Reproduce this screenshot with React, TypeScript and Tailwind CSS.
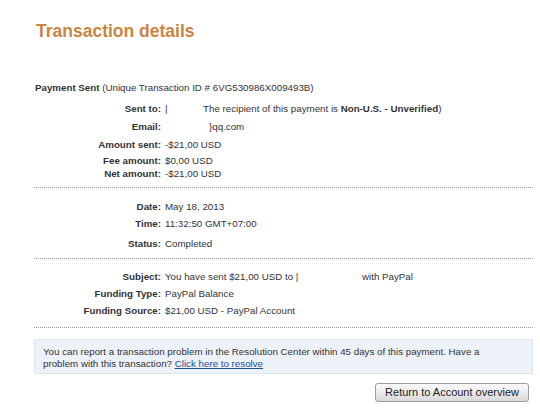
import React from 'react';

const font = { fontFamily: '"Liberation Sans", Arial, sans-serif' };

const Row = ({ label, children, className = '' }: { label: string; children: React.ReactNode; className?: string }) => (
    <div className={`flex items-center ${className}`}>
        <div className="w-[131px] text-right font-bold text-[#333] pr-[4px] shrink-0">{label}</div>
        <div className="text-[#333] whitespace-nowrap">{children}</div>
    </div>
);

const Dots = () => <div className="border-t border-dotted border-[#9a9a9a] w-full" />;

export default function App() {
    return (
        <div className="bg-white w-[540px] h-[416px] overflow-hidden text-[9.75px] leading-[13px]" style={font}>
            <div className="ml-[34px] w-[499px]">
                <h1 className="text-[17.5px] leading-[22px] font-bold text-[#c98641] pt-[20px] pl-[2px]">Transaction details</h1>

                <div className="mt-[39px] text-[#333] pl-[1px]">
                    <span className="font-bold">Payment Sent</span> (Unique Transaction ID # 6VG530986X009493B)
                </div>

                <div className="mt-[8px] flex flex-col">
                    <Row label="Sent to:">
                        <span className="inline-block w-[38px]">|</span>
                        <span>
                            The recipient of this payment is <span className="font-bold">Non-U.S. - Unverified</span>)
                        </span>
                    </Row>
                    <Row label="Email:" className="mt-[5px]">
                        <span className="ml-[44px]">{'}qq.com'}</span>
                    </Row>
                    <Row label="Amount sent:" className="mt-[5px]">-$21,00 USD</Row>
                    <Row label="Fee amount:" className="mt-[3px]">$0,00 USD</Row>
                    <Row label="Net amount:">-$21,00 USD</Row>
                </div>

                <div className="mt-[7px]"><Dots /></div>

                <div className="mt-[12px] flex flex-col">
                    <Row label="Date:">May 18, 2013</Row>
                    <Row label="Time:" className="mt-[4px]">11:32:50 GMT+07:00</Row>
                    <Row label="Status:" className="mt-[7px]">Completed</Row>
                </div>

                <div className="mt-[8px]"><Dots /></div>

                <div className="mt-[11px] flex flex-col">
                    <Row label="Subject:">
                        <span className="inline-block w-[197px]">You have sent $21,00 USD to |</span>
                        <span>with PayPal</span>
                    </Row>
                    <Row label="Funding Type:" className="mt-[4px]">PayPal Balance</Row>
                    <Row label="Funding Source:" className="mt-[4px]">$21,00 USD - PayPal Account</Row>
                </div>

                <div className="mt-[10px]"><Dots /></div>

                <div className="mt-[11px] bg-[#edf2f9] border border-[#dce4ee] pl-[8px] pr-[20px] pt-[6px] text-[#333] leading-[12px] h-[35px]">
                    <div>You can report a transaction problem in the Resolution Center within 45 days of this payment. Have a</div>
                    <div>
                        problem with this transaction?{' '}
                        <a href="#" className="text-[#1f4f8f] underline">Click here to resolve</a>
                    </div>
                </div>

                <div className="flex justify-end mt-[9px] pr-[4px]">
                    <button className="h-[19px] px-[9px] text-[11px] leading-[17px] text-[#222] border border-[#9b9b9b] rounded-[3px] bg-gradient-to-b from-[#fbfbfb] to-[#d9d9d9]">
                        Return to Account overview
                    </button>
                </div>
            </div>
        </div>
    );
}
